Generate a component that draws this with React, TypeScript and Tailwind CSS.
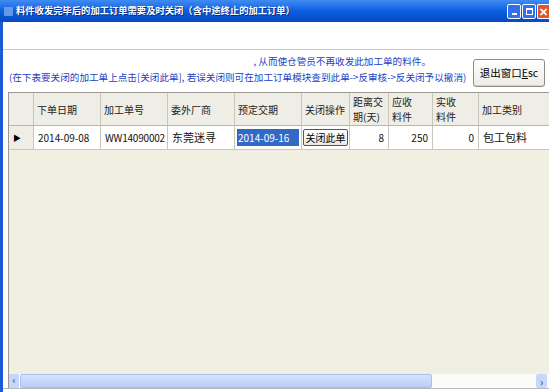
import React from "react"

const cjk = "'Noto Sans CJK SC', 'Liberation Sans', sans-serif"

// column widths of the data grid, starting at the row indicator
const cols = "grid-cols-[25px_67px_67px_67px_67px_48px_39px_44px_46px_75px]"

function TitleBar() {
  return (
    <div className="flex h-[22px] items-center bg-gradient-to-b from-[#3f8cf3] via-[#0a5ee0] to-[#0849c0] pl-[4px]">
      {/* small app icon */}
      <div className="h-[9px] w-[9px] rounded-[1px] bg-[#7aa6e8] opacity-80" />
      <span
        className="ml-[3px] whitespace-nowrap text-[9.3px] font-bold text-white [text-shadow:1px_1px_0_#0a2a80]"
        style={{ fontFamily: cjk }}
      >
        料件收发完毕后的加工订单需要及时关闭（含中途终止的加工订单）
      </span>
      <div className="ml-auto flex items-center gap-[1px] pt-[1px]">
        <div className="flex h-[15px] w-[14px] items-end justify-center rounded-[2px] border border-white bg-[#2f6ff0] pb-[3px]">
          <div className="h-[2px] w-[5px] bg-white" />
        </div>
        <div className="flex h-[15px] w-[14px] items-center justify-center rounded-[2px] border border-white bg-[#2f6ff0]">
          <div className="h-[7px] w-[7px] border border-t-2 border-white" />
        </div>
        <div className="flex h-[15px] w-[12px] items-center justify-center rounded-l-[2px] border border-r-0 border-white bg-[#e0552b] text-[11px] font-bold leading-none text-white">
          ✕
        </div>
      </div>
    </div>
  )
}

function Header() {
  const cell = "flex items-center whitespace-nowrap border-r border-[#c9c7bb] px-[3px] text-[10px] text-[#222]"
  const two = "flex flex-col justify-center whitespace-nowrap border-r border-[#c9c7bb] px-[3px] text-[10px] leading-[15px] text-[#222]"
  return (
    <div className={`grid ${cols} h-[33px] border-b border-[#b9b7aa] bg-[#efeee6]`}>
      <div className={cell} />
      <div className={cell}>下单日期</div>
      <div className={cell}>加工单号</div>
      <div className={cell}>委外厂商</div>
      <div className={cell}>预定交期</div>
      <div className={cell}>关闭操作</div>
      <div className={two}><span>距离交</span><span>期(天)</span></div>
      <div className={two}><span>应收</span><span>料件</span></div>
      <div className={two}><span>实收</span><span>料件</span></div>
      <div className={`${cell} border-r-0`}>加工类别</div>
    </div>
  )
}

function DataRow() {
  const cell = "flex items-center whitespace-nowrap border-r border-b border-[#c9c7bb] bg-white px-[4px] text-[10px] text-[#111]"
  return (
    <div className={`grid ${cols} h-[24px]`}>
      <div className="flex items-center border-r border-b border-[#c9c7bb] bg-[#efeee6] pl-[4px] text-[8px] text-black">▶</div>
      <div className={cell}>2014-09-08</div>
      <div className={`${cell} tracking-[-0.2px]`}>WW14090002</div>
      <div className={`${cell} text-[11px]`}>东莞迷寻</div>
      <div className="flex items-center border-r border-b border-[#c9c7bb] bg-white px-[2px]">
        <div className="flex h-[17px] w-full items-center bg-[#316ac5] px-[1px] text-[10px] text-white">2014-09-16</div>
      </div>
      <div className="flex items-center border-r border-b border-[#c9c7bb] bg-white px-[1px]">
        <div className="flex h-[17px] w-full items-center justify-center whitespace-nowrap rounded-[2px] border border-[#3c5a8c] bg-gradient-to-b from-white to-[#e9e8e0] text-[10px] text-black">
          关闭此单
        </div>
      </div>
      <div className={`${cell} justify-end`}>8</div>
      <div className={`${cell} justify-end`}>250</div>
      <div className={`${cell} justify-end`}>0</div>
      <div className={`${cell} border-r-0 text-[11px]`}>包工包料</div>
    </div>
  )
}

function ScrollBar() {
  return (
    <div className="flex h-[14px] items-stretch bg-[#fbfbf8]">
      <div className="flex w-[10px] items-center justify-center bg-[#c7d6fb] text-[9px] font-bold text-[#4d6185]">‹</div>
      <div className="ml-[1px] w-[412px] rounded-[2px] border border-[#a9bff0] bg-gradient-to-b from-[#d6e2fd] to-[#b9cdf8]" />
      <div className="flex-1" />
      <div className="mr-[2px] flex w-[11px] items-center justify-center rounded-[2px] bg-[#c7d6fb] text-[10px] font-bold text-[#4d6185]">›</div>
    </div>
  )
}

export default function App() {
  return (
    <div className="h-[392px] w-[549px] overflow-hidden bg-white" style={{ fontFamily: cjk }}>
      <TitleBar />
      <div className="flex h-[370px] flex-col border-l-[3px] border-[#1d5ad6]">
        {/* empty menu / tool strip */}
        <div className="h-[28px] border-b border-[#c8c8c8] bg-white" />

        <div className="flex h-[42px] items-start">
          <div className="w-[465px] whitespace-nowrap pl-[6px] text-[9.6px] leading-[16px] text-[#1f3fc2]">
            <div className="mt-[3px] pr-[37px] text-right">, 从而使仓管员不再收发此加工单的料件。</div>
            <div>
              (在下表要关闭的加工单上点击[关闭此单], 若误关闭则可在加工订单模块查到此单-&gt;反审核-&gt;反关闭予以撤消)
            </div>
          </div>
          <button className="mt-[9px] ml-[5px] flex h-[28px] w-[72px] items-center justify-center rounded-[3px] border border-[#8d8b82] bg-gradient-to-b from-white to-[#ecebe5] text-[10.5px] text-black shadow-[inset_0_-1px_0_#d6d3c7]">
            退出窗口<span className="underline">E</span>sc
          </button>
        </div>

        <div className="ml-[5px] flex h-[296px] flex-col border-t border-l border-[#9c9a90] bg-[#f1efe2]">
          <Header />
          <DataRow />
          <div className="flex-1" />
          <ScrollBar />
        </div>
        <div className="flex-1 border-t border-[#b8b8b8] bg-white" />
      </div>
    </div>
  )
}
